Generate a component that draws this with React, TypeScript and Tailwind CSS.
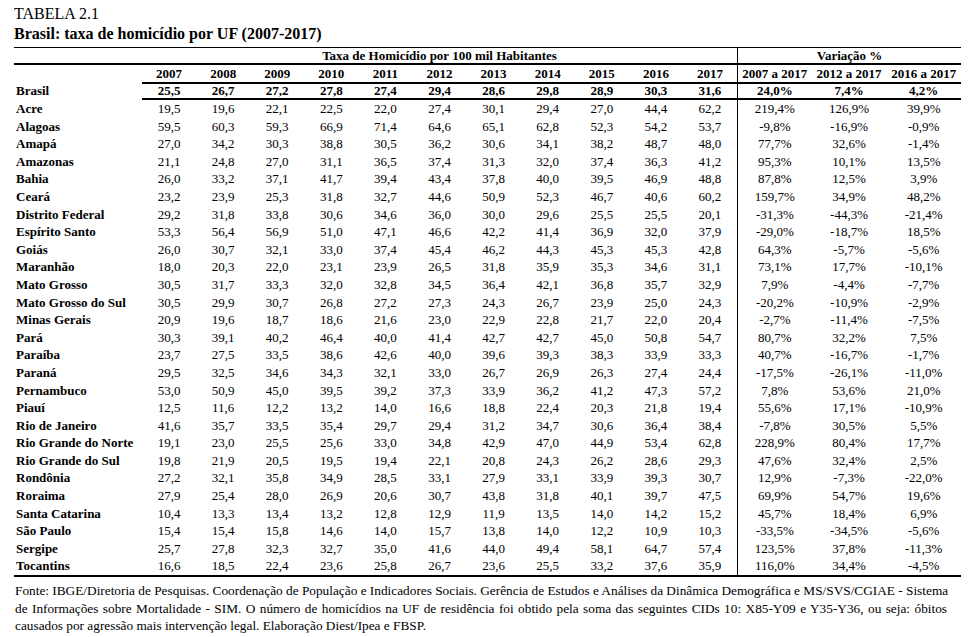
import React from "react";

type Row = [string, string, string];

const raw: Row[] = [
  ["Acre", "19,5 19,6 22,1 22,5 22,0 27,4 30,1 29,4 27,0 44,4 62,2", "219,4% 126,9% 39,9%"],
  ["Alagoas", "59,5 60,3 59,3 66,9 71,4 64,6 65,1 62,8 52,3 54,2 53,7", "-9,8% -16,9% -0,9%"],
  ["Amapá", "27,0 34,2 30,3 38,8 30,5 36,2 30,6 34,1 38,2 48,7 48,0", "77,7% 32,6% -1,4%"],
  ["Amazonas", "21,1 24,8 27,0 31,1 36,5 37,4 31,3 32,0 37,4 36,3 41,2", "95,3% 10,1% 13,5%"],
  ["Bahia", "26,0 33,2 37,1 41,7 39,4 43,4 37,8 40,0 39,5 46,9 48,8", "87,8% 12,5% 3,9%"],
  ["Ceará", "23,2 23,9 25,3 31,8 32,7 44,6 50,9 52,3 46,7 40,6 60,2", "159,7% 34,9% 48,2%"],
  ["Distrito Federal", "29,2 31,8 33,8 30,6 34,6 36,0 30,0 29,6 25,5 25,5 20,1", "-31,3% -44,3% -21,4%"],
  ["Espírito Santo", "53,3 56,4 56,9 51,0 47,1 46,6 42,2 41,4 36,9 32,0 37,9", "-29,0% -18,7% 18,5%"],
  ["Goiás", "26,0 30,7 32,1 33,0 37,4 45,4 46,2 44,3 45,3 45,3 42,8", "64,3% -5,7% -5,6%"],
  ["Maranhão", "18,0 20,3 22,0 23,1 23,9 26,5 31,8 35,9 35,3 34,6 31,1", "73,1% 17,7% -10,1%"],
  ["Mato Grosso", "30,5 31,7 33,3 32,0 32,8 34,5 36,4 42,1 36,8 35,7 32,9", "7,9% -4,4% -7,7%"],
  ["Mato Grosso do Sul", "30,5 29,9 30,7 26,8 27,2 27,3 24,3 26,7 23,9 25,0 24,3", "-20,2% -10,9% -2,9%"],
  ["Minas Gerais", "20,9 19,6 18,7 18,6 21,6 23,0 22,9 22,8 21,7 22,0 20,4", "-2,7% -11,4% -7,5%"],
  ["Pará", "30,3 39,1 40,2 46,4 40,0 41,4 42,7 42,7 45,0 50,8 54,7", "80,7% 32,2% 7,5%"],
  ["Paraíba", "23,7 27,5 33,5 38,6 42,6 40,0 39,6 39,3 38,3 33,9 33,3", "40,7% -16,7% -1,7%"],
  ["Paraná", "29,5 32,5 34,6 34,3 32,1 33,0 26,7 26,9 26,3 27,4 24,4", "-17,5% -26,1% -11,0%"],
  ["Pernambuco", "53,0 50,9 45,0 39,5 39,2 37,3 33,9 36,2 41,2 47,3 57,2", "7,8% 53,6% 21,0%"],
  ["Piauí", "12,5 11,6 12,2 13,2 14,0 16,6 18,8 22,4 20,3 21,8 19,4", "55,6% 17,1% -10,9%"],
  ["Rio de Janeiro", "41,6 35,7 33,5 35,4 29,7 29,4 31,2 34,7 30,6 36,4 38,4", "-7,8% 30,5% 5,5%"],
  ["Rio Grande do Norte", "19,1 23,0 25,5 25,6 33,0 34,8 42,9 47,0 44,9 53,4 62,8", "228,9% 80,4% 17,7%"],
  ["Rio Grande do Sul", "19,8 21,9 20,5 19,5 19,4 22,1 20,8 24,3 26,2 28,6 29,3", "47,6% 32,4% 2,5%"],
  ["Rondônia", "27,2 32,1 35,8 34,9 28,5 33,1 27,9 33,1 33,9 39,3 30,7", "12,9% -7,3% -22,0%"],
  ["Roraima", "27,9 25,4 28,0 26,9 20,6 30,7 43,8 31,8 40,1 39,7 47,5", "69,9% 54,7% 19,6%"],
  ["Santa Catarina", "10,4 13,3 13,4 13,2 12,8 12,9 11,9 13,5 14,0 14,2 15,2", "45,7% 18,4% 6,9%"],
  ["São Paulo", "15,4 15,4 15,8 14,6 14,0 15,7 13,8 14,0 12,2 10,9 10,3", "-33,5% -34,5% -5,6%"],
  ["Sergipe", "25,7 27,8 32,3 32,7 35,0 41,6 44,0 49,4 58,1 64,7 57,4", "123,5% 37,8% -11,3%"],
  ["Tocantins", "16,6 18,5 22,4 23,6 25,8 26,7 23,6 25,5 33,2 37,6 35,9", "116,0% 34,4% -4,5%"],
];

const years = ["2007", "2008", "2009", "2010", "2011", "2012", "2013", "2014", "2015", "2016", "2017"];
const vars = ["2007 a 2017", "2012 a 2017", "2016 a 2017"];

const grid = "grid grid-cols-[128px_repeat(11,minmax(0,1fr))_repeat(3,74.67px)]";

function DataRow({
  name,
  vals,
  pcts,
  bold,
  h,
}: {
  name: string;
  vals: string[];
  pcts: string[];
  bold?: boolean;
  h: string;
}) {
  return (
    <div className={`${grid} ${h} ${bold ? "font-bold" : ""}`}>
      <div className="pl-[2px] font-bold whitespace-nowrap">{name}</div>
      {vals.map((v, i) => (
        <div key={i} className="text-center">
          {v}
        </div>
      ))}
      {pcts.map((p, i) => (
        <div key={i} className={`text-center ${i === 0 ? "border-l border-black" : ""}`}>
          {p}
        </div>
      ))}
    </div>
  );
}

export default function App() {
  return (
    <div className="w-[975px] h-[637px] bg-white text-black font-['Liberation_Serif','Times_New_Roman',serif] overflow-hidden">
      <div className="pl-[14px] pt-[4px]">
        <div className="text-[16px] leading-[20px]">TABELA 2.1</div>
        <div className="text-[16px] leading-[20px] font-bold">Brasil: taxa de homicídio por UF (2007-2017)</div>
      </div>
      <div className="ml-[14px] w-[947px] mt-[3px] text-[13px]">
        <div className="h-px bg-black" />
        <div className="grid grid-cols-[128px_595px_224px] h-[15px] leading-[15px] font-bold">
          <div />
          <div className="text-center">Taxa de Homicídio por 100 mil Habitantes</div>
          <div className="text-center border-l border-black">Variação %</div>
        </div>
        <div className="h-[2px] bg-black" />
        <div className={`${grid} h-[17px] leading-[17px] font-bold`}>
          <div />
          {years.map((y) => (
            <div key={y} className="text-center">
              {y}
            </div>
          ))}
          {vars.map((v, i) => (
            <div key={v} className={`text-center whitespace-nowrap ${i === 0 ? "border-l border-black" : ""}`}>
              {v}
            </div>
          ))}
        </div>
        <div className="flex h-[2px]">
          <div className="w-[128px]" />
          <div className="flex-1 bg-black" />
        </div>
        <DataRow
          name="Brasil"
          vals={"25,5 26,7 27,2 27,8 27,4 29,4 28,6 29,8 28,9 30,3 31,6".split(" ")}
          pcts={["24,0%", "7,4%", "4,2%"]}
          bold
          h="h-[14px] leading-[14px]"
        />
        <div className="flex h-[2px]">
          <div className="w-[128px]" />
          <div className="flex-1 bg-black" />
        </div>
        {raw.map(([n, v, p]) => (
          <DataRow key={n} name={n} vals={v.split(" ")} pcts={p.split(" ")} h="h-[17.6px] leading-[17.6px]" />
        ))}
        <div className="h-[2px] bg-black" />
      </div>
      <div className="ml-[15px] w-[932px] mt-[5px] text-[13.3px] leading-[17.5px]">
        <div className="text-justify [text-align-last:justify] whitespace-nowrap">
          Fonte: IBGE/Diretoria de Pesquisas. Coordenação de População e Indicadores Sociais. Gerência de Estudos e Análises da Dinâmica Demográfica e MS/SVS/CGIAE - Sistema
        </div>
        <div className="text-justify [text-align-last:justify]">
          de Informações sobre Mortalidade - SIM. O número de homicídios na UF de residência foi obtido pela soma das seguintes CIDs 10: X85-Y09 e Y35-Y36, ou seja: óbitos
        </div>
        <div>causados por agressão mais intervenção legal. Elaboração Diest/Ipea e FBSP.</div>
      </div>
    </div>
  );
}
